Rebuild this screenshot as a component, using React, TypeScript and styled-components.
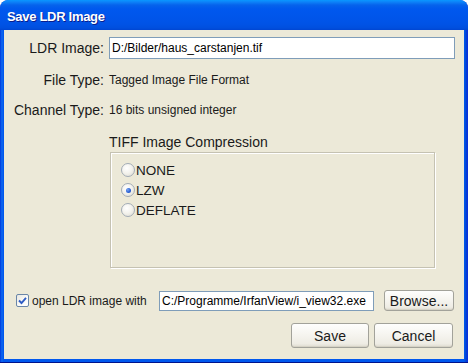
import React from "react";
import styled, { createGlobalStyle } from "styled-components";

const Global = createGlobalStyle`
  html, body { margin: 0; padding: 0; background: #ffffff; }
  body { font-family: "Liberation Sans", Arial, sans-serif; }
  * { box-sizing: border-box; }
`;

const Window = styled.div`
  width: 468px;
  height: 363px;
  display: flex;
  flex-direction: column;
  background: linear-gradient(to right, #0831d9 0px, #0055ea 1px, #166aee 2px, #0058ee 3px, #0058ee 464px, #0050e0 465px, #0046d6 466px, #0831d9 467px);
  border-radius: 8px 8px 0 0;
  padding: 0 4px 4px 4px;
  overflow: hidden;
  box-shadow: inset 0 -1px 0 #00138c;
`;

const TitleBar = styled.div`
  height: 30px;
  margin: 0 -4px;
  padding-left: 7px;
  display: flex;
  align-items: center;
  border-radius: 8px 8px 0 0;
  background: linear-gradient(
    to bottom,
    #0997ff 0px,
    #0d82f8 2px,
    #0663ec 5px,
    #0058ee 9px,
    #0055ea 18px,
    #0053e6 24px,
    #004fde 28px,
    #0046d2 30px
  );
`;

const Title = styled.span`
  font-family: "Liberation Sans", Arial, sans-serif;
  font-weight: bold;
  font-size: 13px;
  letter-spacing: -0.3px;
  color: #ffffff;
  text-shadow: 1px 1px 0 #0a1e8c;
  margin-top: 2px;
`;

const Client = styled.div`
  flex: 1;
  background: #ece9d8;
  display: flex;
  flex-direction: column;
  padding-bottom: 11px;
`;

const FieldRow = styled.div<{ $h: number; $mt?: number }>`
  height: ${(p) => p.$h}px;
  margin-top: ${(p) => p.$mt ?? 0}px;
  display: grid;
  grid-template-columns: 100px 1fr;
  column-gap: 5px;
  align-items: center;
  padding-right: 9px;
`;

const Label = styled.span`
  font-size: 14px;
  color: #1a1a1a;
  text-align: right;
  white-space: nowrap;
`;

const Value = styled.span`
  font-size: 12px;
  color: #1a1a1a;
  white-space: nowrap;
`;

const TextField = styled.div<{ $h: number; $w?: number }>`
  height: ${(p) => p.$h}px;
  width: ${(p) => (p.$w ? `${p.$w}px` : "auto")};
  background: #ffffff;
  border: 1px solid #7f9db9;
  font-size: 12px;
  color: #000;
  display: flex;
  align-items: center;
  padding-left: 2px;
  white-space: nowrap;
  overflow: hidden;
`;

const Group = styled.div`
  margin-top: 9px;
  padding-left: 105px;
  display: flex;
  flex-direction: column;
`;

const GroupTitle = styled.span`
  font-size: 14px;
  color: #1a1a1a;
  height: 16px;
  line-height: 16px;
`;

const GroupBox = styled.div`
  margin-top: 2px;
  margin-left: 1px;
  width: 325px;
  height: 116px;
  border: 1px solid #c5c2b2;
  box-shadow: inset 1px 1px 0 #ffffff, 1px 1px 0 #ffffff;
  padding: 9px 0 0 10px;
  display: flex;
  flex-direction: column;
  gap: 4px;
`;

const RadioRow = styled.div`
  height: 16px;
  display: flex;
  align-items: center;
  gap: 1px;
  font-size: 13.5px;
  color: #1a1a1a;
`;

const RadioCircle = styled.span<{ $checked?: boolean }>`
  width: 14px;
  height: 14px;
  border-radius: 50%;
  border: 1px solid #a3acb6;
  background: radial-gradient(circle at 40% 35%, #ffffff 0%, #f4f3ee 45%, #dcdad0 100%);
  position: relative;
  flex: none;
  &::after {
    content: "";
    display: ${(p) => (p.$checked ? "block" : "none")};
    position: absolute;
    left: 3.5px;
    top: 3.5px;
    width: 5px;
    height: 5px;
    border-radius: 50%;
    background: radial-gradient(circle at 35% 35%, #7aa6f0 0%, #2c62d6 55%, #1a45b0 100%);
  }
`;

const OpenRow = styled.div`
  margin-top: 22px;
  height: 21px;
  display: flex;
  align-items: center;
  padding: 0 10px 0 12px;
`;

const CheckBox = styled.span`
  width: 13px;
  height: 13px;
  border: 1px solid #6a86a8;
  border-radius: 2px;
  background: linear-gradient(135deg, #e8e7e1 0%, #fbfbf9 60%, #ffffff 100%);
  display: flex;
  align-items: center;
  justify-content: center;
  flex: none;
`;

const CheckText = styled.span`
  margin-left: 3px;
  font-size: 12px;
  color: #1a1a1a;
  white-space: nowrap;
`;

const Spacer = styled.div<{ $w?: number }>`
  margin-left: ${(p) => (p.$w ? `${p.$w}px` : "auto")};
`;

const Button = styled.div<{ $w: number; $h: number }>`
  width: ${(p) => p.$w}px;
  height: ${(p) => p.$h}px;
  border: 1px solid #a2a29a;
  border-radius: 3px;
  background: linear-gradient(to bottom, #fefefd 0%, #f6f5f0 45%, #eeece4 85%, #dedbd0 100%);
  box-shadow: inset 0 -1px 0 #d6d3c6;
  display: flex;
  align-items: center;
  justify-content: center;
  font-size: 14px;
  color: #1a1a1a;
  flex: none;
`;

const ButtonRow = styled.div`
  margin-top: 12px;
  display: flex;
  justify-content: flex-end;
  gap: 5px;
  padding-right: 11px;
`;

const radios = [
  { label: "NONE", checked: false },
  { label: "LZW", checked: true },
  { label: "DEFLATE", checked: false },
];

export default function App() {
  return (
    <>
      <Global />
      <Window>
        <TitleBar>
          <Title>Save LDR Image</Title>
        </TitleBar>
        <Client>
          <FieldRow $h={22} $mt={7}>
            <Label>LDR Image:</Label>
            <TextField $h={22}>D:/Bilder/haus_carstanjen.tif</TextField>
          </FieldRow>
          <FieldRow $h={30} $mt={6}>
            <Label>File Type:</Label>
            <Value>Tagged Image File Format</Value>
          </FieldRow>
          <FieldRow $h={30}>
            <Label>Channel Type:</Label>
            <Value>16 bits unsigned integer</Value>
          </FieldRow>
          <Group>
            <GroupTitle>TIFF Image Compression</GroupTitle>
            <GroupBox>
              {radios.map((r) => (
                <RadioRow key={r.label}>
                  <RadioCircle $checked={r.checked} />
                  {r.label}
                </RadioRow>
              ))}
            </GroupBox>
          </Group>
          <OpenRow>
            <CheckBox>
              <svg width="9" height="9" viewBox="0 0 9 9">
                <polyline
                  points="1,4.5 3.5,7 8,1.8"
                  fill="none"
                  stroke="#2e5cc4"
                  strokeWidth="1.9"
                />
              </svg>
            </CheckBox>
            <CheckText>open LDR image with</CheckText>
            <Spacer />
            <TextField $h={20} $w={215}>C:/Programme/IrfanView/i_view32.exe</TextField>
            <Spacer $w={10} />
            <Button $w={70} $h={21}>Browse...</Button>
          </OpenRow>
          <ButtonRow>
            <Button $w={78} $h={25}>Save</Button>
            <Button $w={79} $h={25}>Cancel</Button>
          </ButtonRow>
        </Client>
      </Window>
    </>
  );
}
